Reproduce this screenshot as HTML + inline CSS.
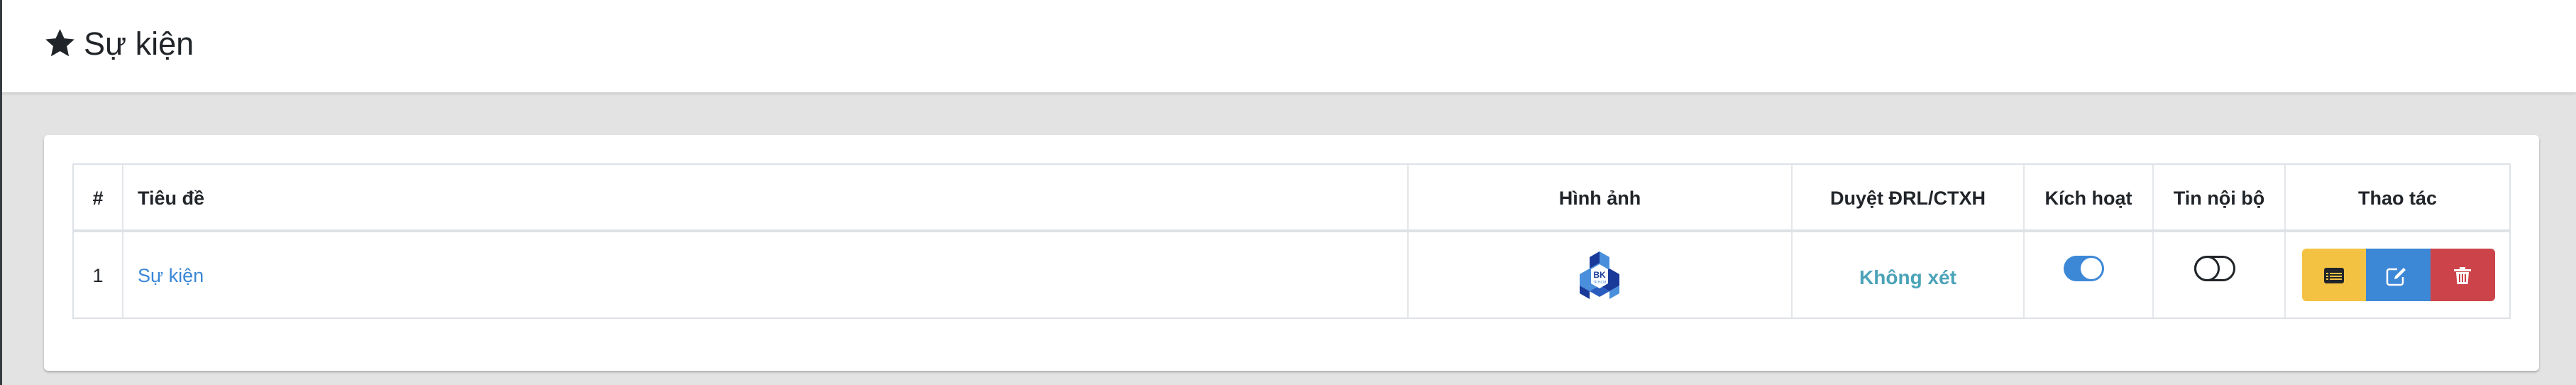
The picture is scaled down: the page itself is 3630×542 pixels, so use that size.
<!DOCTYPE html>
<html><head><meta charset="utf-8">
<style>
*{margin:0;padding:0;box-sizing:border-box}
body{width:3630px;height:542px;background:#e3e3e3;font-family:"Liberation Sans",sans-serif;position:relative;overflow:hidden;color:#212529}
.edge{position:absolute;left:0;top:0;width:3px;height:542px;background:#343a40;z-index:5}
.hdr{position:absolute;left:0;top:0;width:3630px;height:130px;background:#fff;box-shadow:0 2px 4px rgba(0,0,0,.12)}
.title{position:absolute;left:118px;top:32px;font-size:45px;line-height:60px;color:#212529}
.card{position:absolute;left:62px;top:190px;width:3516px;height:332px;background:#fff;border-radius:6px;box-shadow:0 2px 3px rgba(0,0,0,.25)}
.t{position:absolute;left:102px;top:230px;width:3436px;height:219px;border:2px solid #dee2e6}
.vl{position:absolute;top:0;width:2px;height:215px;background:#e3e6ea}
.hl{position:absolute;left:0;top:91px;width:3432px;height:4px;background:#dee2e6}
.h{position:absolute;font-weight:bold;font-size:27px;line-height:30px;top:32px;text-align:center}
.a{position:absolute}
</style></head><body>
<div class="edge"></div>
<div class="hdr">
<svg class="a" style="left:62px;top:38px" width="45" height="45" viewBox="0 0 24 24"><path fill="#212529" d="M12 1.5l3.2 7 7.6.8-5.7 5.1 1.6 7.6L12 18.1 5.3 22l1.6-7.6L1.2 9.3l7.6-.8z"/></svg>
<div class="title">Sự kiện</div>
</div>
<div class="card"></div>
<div class="t">
<div class="vl" style="left:68px"></div>
<div class="vl" style="left:1879px"></div>
<div class="vl" style="left:2420px"></div>
<div class="vl" style="left:2747px"></div>
<div class="vl" style="left:2929px"></div>
<div class="vl" style="left:3115px"></div>
<div class="hl"></div>
<div class="h" style="left:0;width:68px">#</div>
<div class="h" style="left:90px">Tiêu đề</div>
<div class="h" style="left:1881px;width:539px">Hình ảnh</div>
<div class="h" style="left:2422px;width:325px">Duyệt ĐRL/CTXH</div>
<div class="h" style="left:2749px;width:180px">Kích hoạt</div>
<div class="h" style="left:2931px;width:184px">Tin nội bộ</div>
<div class="h" style="left:3117px;width:315px">Thao tác</div>
<div class="a" style="left:0;width:68px;top:141px;font-size:27px;text-align:center">1</div>
<div class="a" style="left:90px;top:141px;font-size:27px;color:#3a87d6">Sự kiện</div>
<div class="a" style="left:2422px;width:325px;top:143px;font-size:28px;font-weight:bold;color:#4ba3b8;text-align:center">Không xét</div>
</div>
<svg class="a" style="left:2222px;top:354px" width="64" height="67" viewBox="0 0 64 67">
<polygon points="32,0 46,8 46,24 32,32 18,24 18,8" fill="#4a8fdc"/>
<polygon points="32,0 18,8 18,24 32,16" fill="#1a3a9a"/>
<polygon points="18,24 32,32 32,48 18,56 4,48 4,32" fill="#4a8fdc"/>
<polygon points="46,24 60,32 60,48 46,56 32,48 32,32" fill="#1a3a9a"/>
<polygon points="4,48 18,56 18,67 4,59" fill="#1a3a9a"/>
<polygon points="60,48 46,56 46,67 60,59" fill="#4a8fdc"/>
<polygon points="18,56 32,48 46,56 32,64" fill="#2a5cc0"/>
<polygon points="32,18 44,25 44,45 32,52 20,45 20,25" fill="#fff"/>
<text x="32" y="37" font-size="12" font-weight="bold" text-anchor="middle" fill="#1a3a9a" font-family="Liberation Sans">BK</text>
<text x="32" y="45" font-size="5" text-anchor="middle" fill="#4a8fdc" font-family="Liberation Sans">TP.HCM</text>
</svg>
<div class="a" style="left:2908px;top:360px;width:57px;height:36px;border-radius:18px;background:#3d88d6"></div>
<div class="a" style="left:2932px;top:363px;width:30px;height:30px;border-radius:50%;background:#fff"></div>
<div class="a" style="left:3092px;top:360px;width:58px;height:36px;border-radius:18px;border:3px solid #212529"></div>
<div class="a" style="left:3092px;top:360px;width:36px;height:36px;border-radius:50%;border:3px solid #212529"></div>
<div class="a" style="left:3244px;top:350px;width:91px;height:74px;background:#f4c243;border-radius:6px 0 0 6px"></div>
<div class="a" style="left:3334px;top:350px;width:91px;height:74px;background:#3d88d6"></div>
<div class="a" style="left:3425px;top:350px;width:91px;height:74px;background:#cc444a;border-radius:0 6px 6px 0"></div>
<svg class="a" style="left:3275px;top:377px" width="28" height="22" viewBox="0 0 28 22"><rect width="28" height="22" rx="3" fill="#212529"/><g fill="#f4c243"><rect x="3" y="7" width="3" height="2"/><rect x="8" y="7" width="17" height="2"/><rect x="3" y="11" width="3" height="2"/><rect x="8" y="11" width="17" height="2"/><rect x="3" y="15" width="3" height="2"/><rect x="8" y="15" width="17" height="2"/></g></svg>
<svg class="a" style="left:3362px;top:375px" width="30" height="28" viewBox="0 0 30 28"><path d="M16 4H5a3 3 0 0 0-3 3v16a3 3 0 0 0 3 3h16a3 3 0 0 0 3-3V15" fill="none" stroke="#fff" stroke-width="2.5"/><path d="M25 2l3 3-12 12-4 1 1-4z" fill="#fff"/></svg>
<svg class="a" style="left:3458px;top:376px" width="24" height="25" viewBox="0 0 24 25"><rect x="0" y="3" width="24" height="3" fill="#fff"/><rect x="8" y="0" width="8" height="4" fill="#fff"/><path d="M3 7h18l-1.5 17h-15z" fill="#fff"/><g fill="#cc444a"><rect x="7" y="10" width="2" height="11"/><rect x="11" y="10" width="2" height="11"/><rect x="15" y="10" width="2" height="11"/></g></svg>
</body></html>
